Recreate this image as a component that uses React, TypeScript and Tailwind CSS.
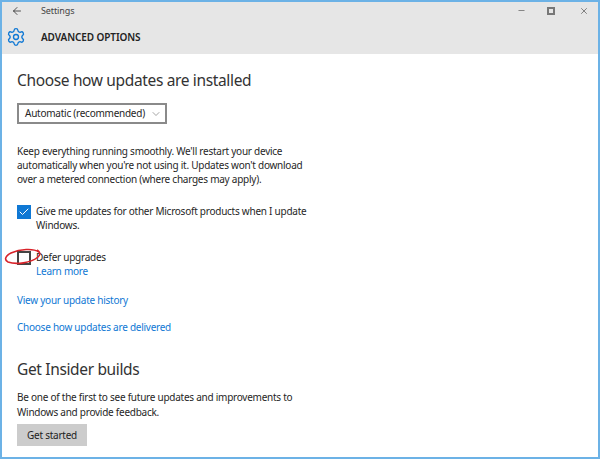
import React from "react";
import { ArrowLeft, Settings, Minus, X, ChevronDown, Check } from "lucide-react";

export default function App() {
  return (
    <div className="w-[600px] h-[459px] bg-white border-2 border-[#6cb2e6] overflow-hidden flex flex-col text-[#262626] font-['Noto_Sans',sans-serif]">
      <header className="h-[52px] bg-[#e6e6e6] flex flex-col shrink-0">
        <div className="h-[17px] flex items-center">
          <ArrowLeft className="w-[12px] h-[12px] ml-[9px] text-[#222]" strokeWidth={1.5} />
          <span className="ml-[18px] text-[9px] tracking-[-0.1px] text-[#444]">Settings</span>
          <div className="ml-auto flex items-center">
            <Minus className="w-[9px] h-[9px] text-[#666]" strokeWidth={2} />
            <span className="ml-[21px] w-[8px] h-[8px] border-2 border-[#777]" />
            <X className="ml-[24px] mr-[9px] w-[10px] h-[10px] text-[#444]" strokeWidth={1.5} />
          </div>
        </div>
        <div className="flex items-center mt-[8px]">
          <Settings className="w-[20px] h-[20px] ml-[4px] text-[#0f78d4]" strokeWidth={1.6} />
          <span className="ml-[15px] text-[10px] font-semibold tracking-[-0.1px] text-[#222]">ADVANCED OPTIONS</span>
        </div>
      </header>
      <main className="flex-1 pl-[15px] flex flex-col items-start">
        <h1 className="mt-[14px] text-[15.5px] leading-[24px] tracking-[-0.35px] text-[#333]">Choose how updates are installed</h1>
        <div className="mt-[11px] w-[150px] h-[21px] border-2 border-[#8a8a8a] flex items-center justify-between pl-[6px] pr-[3px] text-[10px] tracking-[-0.25px] whitespace-nowrap">
          <span>Automatic (recommended)</span>
          <ChevronDown className="w-[12px] h-[12px] text-[#666]" strokeWidth={1.2} />
        </div>
        <p className="mt-[20px] text-[10px] leading-[14px] tracking-[-0.25px] whitespace-nowrap">
          Keep everything running smoothly. We'll restart your device<br />
          automatically when you're not using it. Updates won't download<br />
          over a metered connection (where charges may apply).
        </p>
        <div className="mt-[18px] flex items-start gap-[5px]">
          <span className="w-[14px] h-[14px] mt-[1px] bg-[#0f78d4] flex items-center justify-center">
            <Check className="w-[12px] h-[12px] text-white" strokeWidth={2} />
          </span>
          <p className="text-[10px] leading-[14px] tracking-[-0.25px] whitespace-nowrap">
            Give me updates for other Microsoft products when I update<br />Windows.
          </p>
        </div>
        <div className="mt-[18px] flex items-start gap-[5px] relative">
          <span className="w-[14px] h-[14px] mt-[1px] border-2 border-[#444]" />
          <div className="text-[10px] leading-[14px] tracking-[-0.25px]">
            <p>Defer upgrades</p>
            <p className="text-[#0f78d4]">Learn more</p>
          </div>
          <svg className="absolute left-[-13px] top-[-2px]" width="40" height="20" viewBox="0 0 40 20" fill="none">
            <path d="M35 4 C29 0 16 1 7 5 C1 8 0 12 4 14 C12 17 27 15 34 9 C37 6 36 4 33 2" stroke="#d9232a" strokeWidth="1.6" />
          </svg>
        </div>
        <a className="mt-[15px] text-[10px] leading-[14px] tracking-[-0.25px] text-[#0f78d4]">View your update history</a>
        <a className="mt-[13px] text-[10px] leading-[14px] tracking-[-0.25px] text-[#0f78d4]">Choose how updates are delivered</a>
        <h2 className="mt-[23px] text-[15.5px] leading-[24px] tracking-[-0.35px] text-[#333]">Get Insider builds</h2>
        <p className="mt-[9px] text-[10px] leading-[15px] tracking-[-0.25px] whitespace-nowrap">
          Be one of the first to see future updates and improvements to<br />Windows and provide feedback.
        </p>
        <button className="mt-[4px] w-[70px] h-[22px] bg-[#cccccc] text-[10px] tracking-[-0.25px] text-[#222]">Get started</button>
      </main>
    </div>
  );
}
